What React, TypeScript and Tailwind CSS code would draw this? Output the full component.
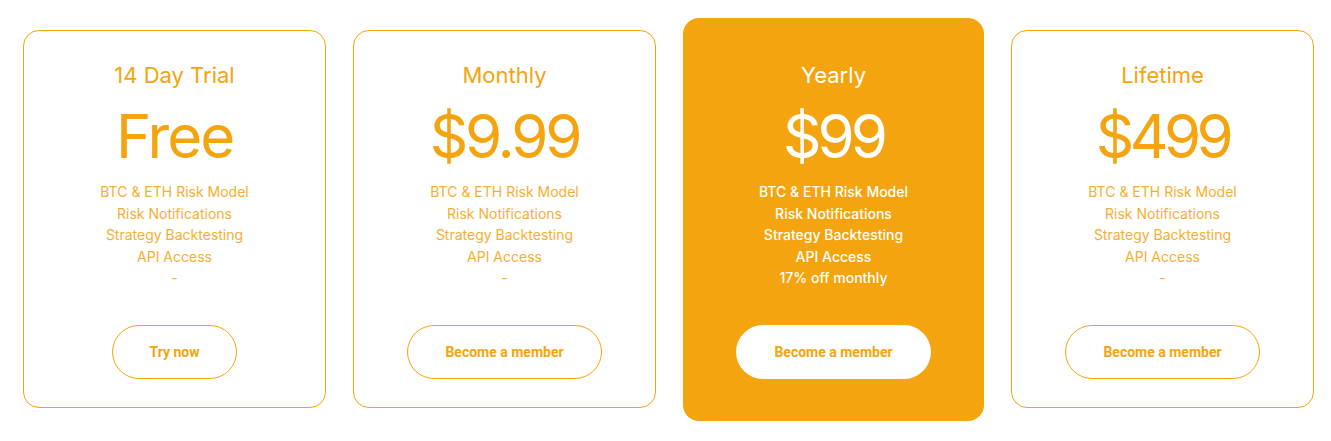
import React from "react";

type Plan = {
  title: string;
  price: string;
  priceTrack: string;
  extra: string;
  cta: string;
  featured?: boolean;
  ctaWidth: string;
};

const plans: Plan[] = [
  { title: "14 Day Trial", price: "Free", priceTrack: "tracking-[-2px]", extra: "-", cta: "Try now", ctaWidth: "w-[125px]" },
  { title: "Monthly", price: "$9.99", priceTrack: "tracking-[-3.2px]", extra: "-", cta: "Become a member", ctaWidth: "w-[195px]" },
  { title: "Yearly", price: "$99", priceTrack: "tracking-[-4px]", extra: "17% off monthly", cta: "Become a member", featured: true, ctaWidth: "w-[195px]" },
  { title: "Lifetime", price: "$499", priceTrack: "tracking-[-4.5px]", extra: "-", cta: "Become a member", ctaWidth: "w-[195px]" },
];

const features = ["BTC & ETH Risk Model", "Risk Notifications", "Strategy Backtesting", "API Access"];

function Card({ plan }: { plan: Plan }) {
  const f = plan.featured;
  return (
    <div
      className={
        "flex-1 flex flex-col items-center rounded-[16px] " +
        (f
          ? "bg-[#f4a40e] text-white h-[403px] pt-[41px] pb-[42px]"
          : "bg-white border border-[#f4a40e] text-[#f4a40e] mt-[12px] h-[378px] pt-[28px] pb-[28px]")
      }
    >
      <div className="text-[22px] leading-[32px] h-[32px]">{plan.title}</div>
      <div className={"text-[60px] leading-[60px] mt-[15px] " + plan.priceTrack}>{plan.price}</div>
      <div
        className={
          "mt-[15px] flex flex-col items-center text-[14px] leading-[21.6px] " +
          (f ? "text-white font-medium" : "text-[#f6ae32]")
        }
      >
        {features.map((x) => (
          <div key={x}>{x}</div>
        ))}
        <div>{plan.extra}</div>
      </div>
      <button
        className={
          plan.ctaWidth +
          " mt-auto h-[54px] rounded-full text-[14px] font-bold font-['Roboto',sans-serif] " +
          (f ? "bg-white text-[#f4a40e]" : "bg-white border border-[#f4a40e] text-[#f4a40e]")
        }
      >
        {plan.cta}
      </button>
    </div>
  );
}

export default function App() {
  return (
    <div className="w-[1331px] h-[441px] bg-white font-['Inter',sans-serif] flex items-start pt-[18px] pl-[23px] pr-[17px] gap-[27px]">
      {plans.map((p) => (
        <Card key={p.title} plan={p} />
      ))}
    </div>
  );
}
